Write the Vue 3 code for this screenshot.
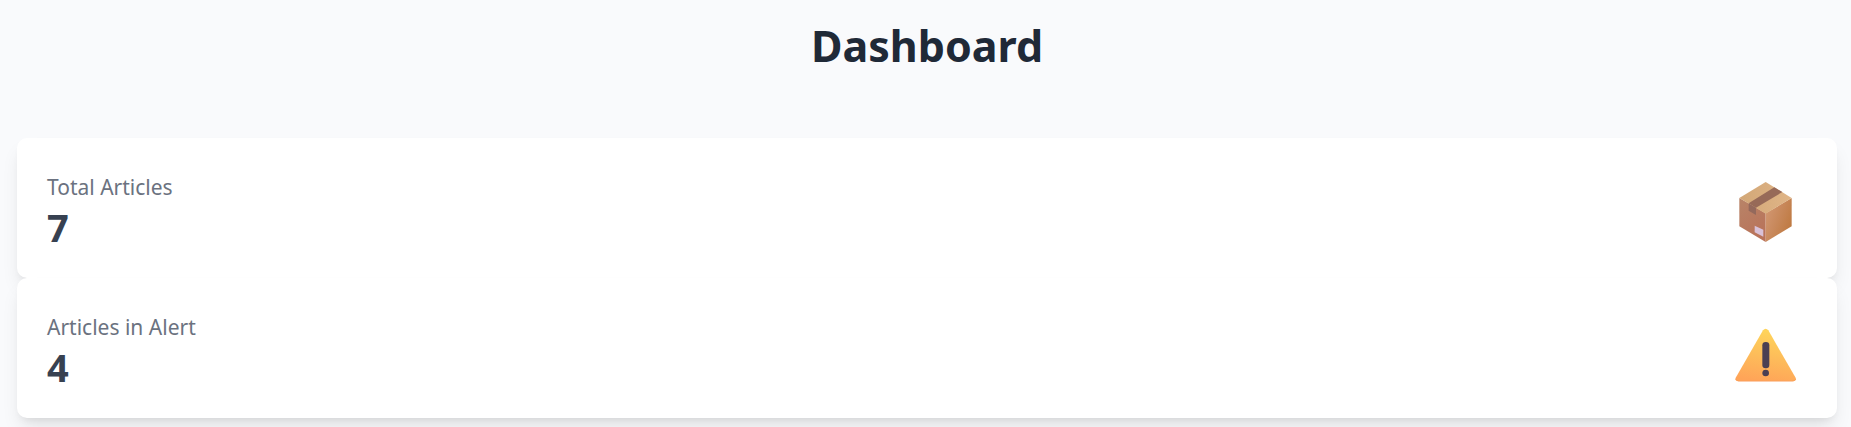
<script setup>
const stats = [
  { id: 'total', label: 'Total Articles', value: 7, icon: 'package' },
  { id: 'alert', label: 'Articles in Alert', value: 4, icon: 'warning' },
]
</script>

<template>
  <main class="dashboard">
    <h1 class="title">Dashboard</h1>
    <section class="cards">
      <article v-for="stat in stats" :key="stat.id" class="card">
        <div class="info">
          <h2 class="label">{{ stat.label }}</h2>
          <p class="value">{{ stat.value }}</p>
        </div>
        <svg v-if="stat.icon === 'package'" class="icon" viewBox="15 -9 246 246" aria-hidden="true">
          <defs>
            <linearGradient id="boxTop" x1="0" y1="0" x2="1" y2="0">
              <stop offset="0" stop-color="#d2a777" />
              <stop offset="1" stop-color="#e0b587" />
            </linearGradient>
            <linearGradient id="boxLeft" x1="0" y1="0" x2="0.5" y2="1">
              <stop offset="0" stop-color="#b88468" />
              <stop offset="1" stop-color="#b9735a" />
            </linearGradient>
            <linearGradient id="boxRight" x1="0" y1="0" x2="1" y2="0.6">
              <stop offset="0" stop-color="#d59b78" />
              <stop offset="0.5" stop-color="#c98a5e" />
              <stop offset="1" stop-color="#bf7a42" />
            </linearGradient>
          </defs>
          <path d="M58 84L137 130V216L58 169Z" fill="url(#boxLeft)" />
          <path d="M137 130L215 84V169L137 216Z" fill="url(#boxRight)" />
          <path d="M137 36L215 84L137 131L58 84Z" fill="url(#boxTop)" />
          <path d="M163 52L187 66L108 113L86 100Z" fill="#976a58" />
          <path d="M86 100L108 113V135L86 122Z" fill="#94695c" />
          <path d="M104 167L130 179V200L104 187Z" fill="#d9c1d8" />
        </svg>
        <svg v-else class="icon" viewBox="15 -9 246 246" aria-hidden="true">
          <defs>
            <linearGradient id="warnFill" x1="0.6" y1="0" x2="0.4" y2="1">
              <stop offset="0" stop-color="#ffd65a" />
              <stop offset="0.55" stop-color="#fdbb5a" />
              <stop offset="1" stop-color="#ffa458" />
            </linearGradient>
          </defs>
          <path
            d="M129 61Q137 51 145 61L226 202Q232 213 219 214H55Q42 213 48 202Z"
            fill="url(#warnFill)"
          />
          <path d="M49 208Q51 213 56 213H218Q224 213 226 208" fill="none" stroke="#f79a5a" stroke-width="2" />
          <rect x="127" y="96" width="21" height="79" rx="10" fill="#4b4053" />
          <circle cx="137" cy="189" r="10" fill="#4b4053" />
        </svg>
      </article>
    </section>
  </main>
</template>

<style>
body {
  margin: 0;
  background: #f9fafc;
}
</style>

<style scoped>
.dashboard {
  padding: 16px 14px 9px 17px;
  font-family: "Segoe UI", "Noto Sans", "Open Sans", sans-serif;
}

.title {
  margin: 0 0 62px;
  color: #1f2937;
  font-size: 43px;
  font-weight: 700;
  line-height: 60px;
  text-align: center;
}

.card {
  display: flex;
  align-items: center;
  justify-content: space-between;
  padding: 29px 30px;
  border-radius: 10px;
  background: #fff;
  box-shadow: 0 12px 19px -4px rgba(0, 0, 0, 0.1), 0 5px 8px -5px rgba(0, 0, 0, 0.1);
}

.label {
  margin: 0;
  color: #6b7280;
  font-size: 21px;
  font-weight: 400;
  line-height: 40px;
}

.value {
  margin: 0;
  padding-bottom: 2px;
  color: #374151;
  font-size: 38px;
  font-weight: 700;
  line-height: 40px;
}

.icon {
  flex: none;
  width: 82px;
  height: 82px;
}
</style>
